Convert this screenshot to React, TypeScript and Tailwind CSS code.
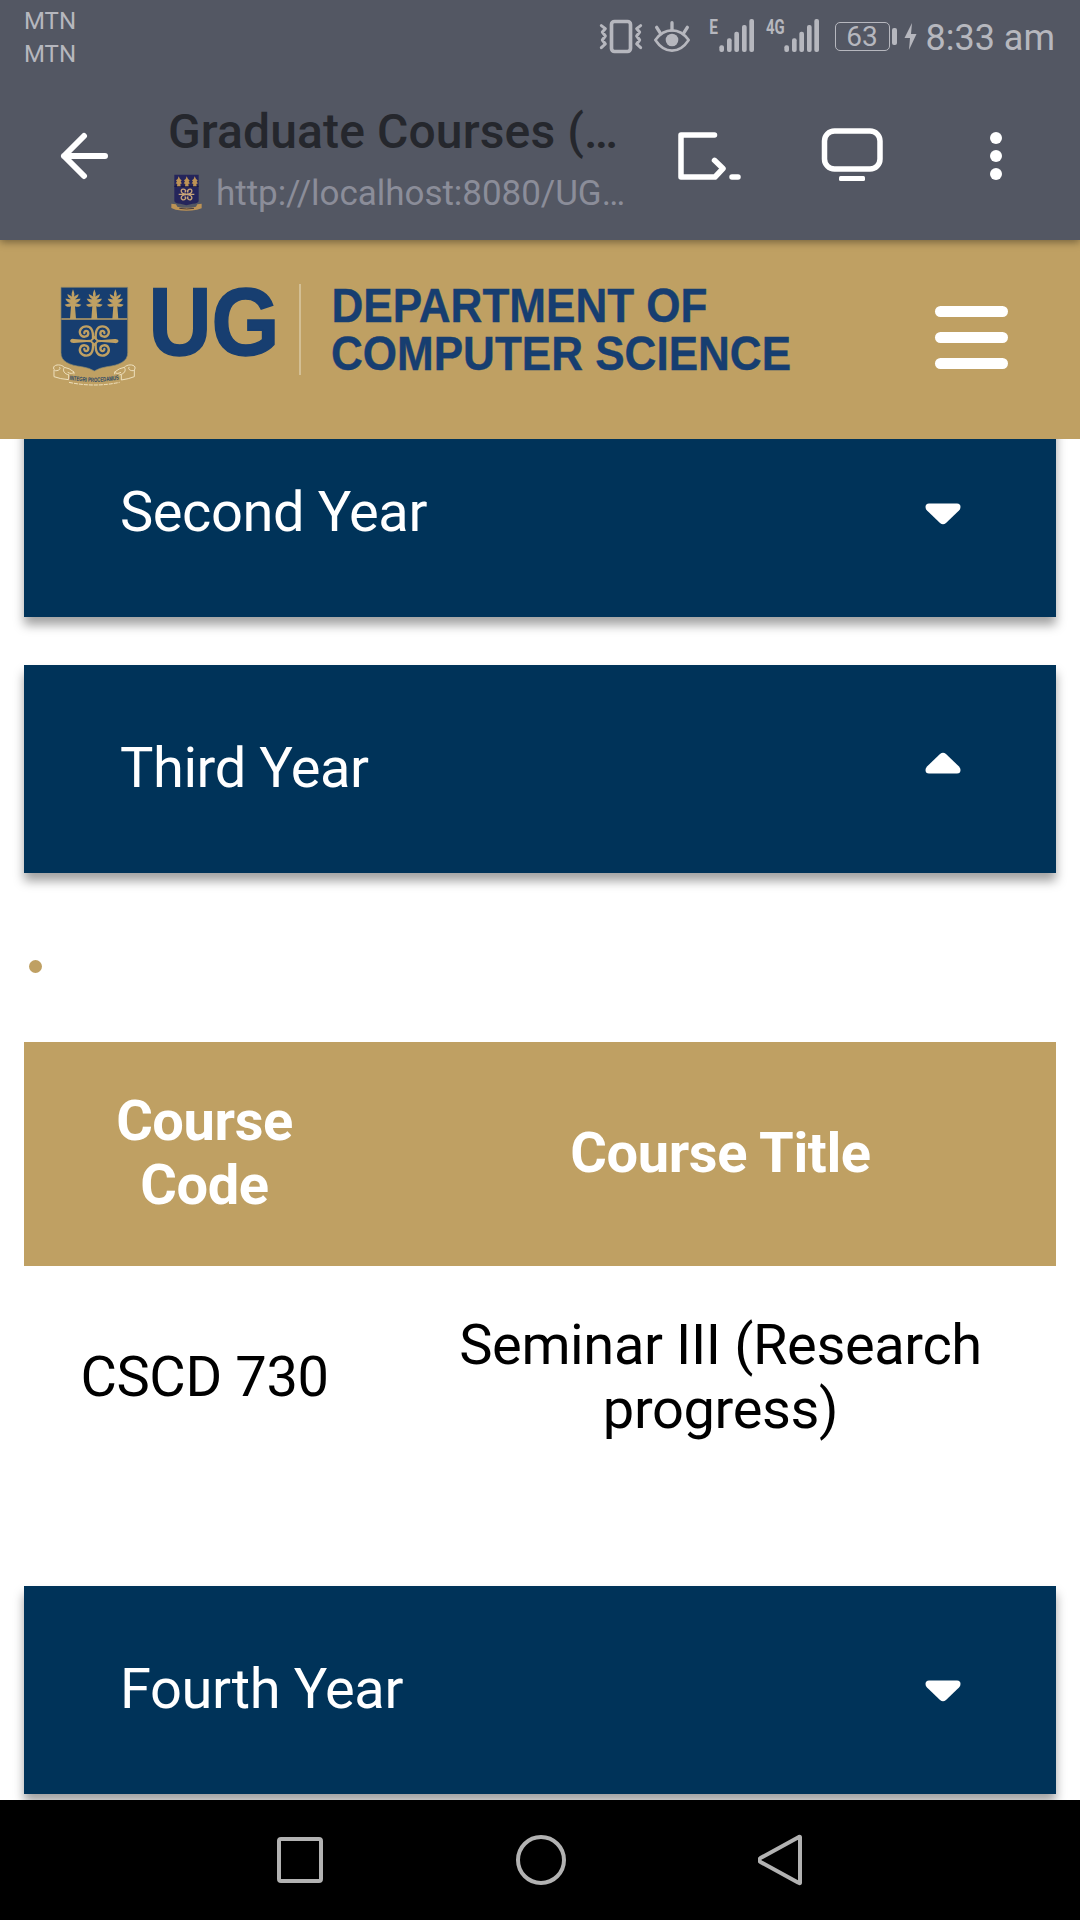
import React from "react";

const STATUS = "#b6b7be";

function Vibrate() {
  return (
    <svg className="h-[36px] w-[44px] shrink-0" viewBox="57 54 132 108" fill="none" stroke={STATUS}>
      <rect x="94.500" y="64.500" width="57" height="90" rx="9" strokeWidth="11" />
      <path d="M64 77l12 9-9 10 9 12-9 12 9 12-12 11M182 77l-12 9 9 10-9 12 9 12-9 12 12 11" strokeWidth="9" strokeLinecap="round" strokeLinejoin="round" />
    </svg>
  );
}

function Eye() {
  return (
    <svg className="ml-[9px] h-[36px] w-[40px] shrink-0" viewBox="216 54 120 108" fill="none" stroke={STATUS}>
      <path d="M226 120Q247 91 276 91T326 120Q305 152 276 152T226 120Z" strokeWidth="8" strokeLinejoin="round" />
      <circle cx="276" cy="120" r="19" fill={STATUS} stroke="none" />
      <path d="M276 68v22M230 82l10 16M322 82l-10 16" strokeWidth="10" strokeLinecap="round" />
    </svg>
  );
}

function Signal({ label }: { label: string }) {
  const wide = label.length > 1;
  return (
    <svg className={wide ? "ml-[10px] -mt-[6px] h-[42px] w-[55px] shrink-0" : "ml-[16px] -mt-[6px] h-[42px] w-[47px] shrink-0"} viewBox={wide ? "-24 36 165 126" : "0 36 141 126"} fill={STATUS}>
      <text x={wide ? -21 : 4} y="102" fontFamily="Roboto" fontWeight="700" fontSize="62" textLength={wide ? 56 : 26} lengthAdjust="spacingAndGlyphs">{label}</text>
      <rect x="34" y="136" width="14" height="20" rx="6" />
      <rect x="57" y="115" width="14" height="41" rx="6" />
      <rect x="79" y="95" width="14" height="61" rx="6" />
      <rect x="102" y="75" width="14" height="81" rx="6" />
      <rect x="124" y="57" width="14" height="99" rx="6" />
    </svg>
  );
}

function Crest() {
  const tree = "M0 88c-3 8-6 14-3 22-5-3-9-6-14-7 1 7 5 12 11 15-6 0-11-2-17-2 4 8 9 12 16 13-6 3-11 3-18 5 6 7 13 8 19 5l-3 38h18l-3-38c6 3 13 2 19-5-7-2-12-2-18-5 7-1 12-5 16-13-6 0-11 2-17 2 6-3 10-8 11-15-5 1-9 4-14 7 3-8 0-14-3-22z";
  return (
    <g transform="translate(30 260) scale(.33333)">
      <path d="M93 82H293V278C294 304 266 316 231 320Q206 324 193 333Q180 324 155 320C119 316 92 304 93 278Z" fill="#173e70" stroke="#8c8a6d" strokeWidth="2" />
      <path d="M94 177H292" stroke="#bfa063" strokeWidth="4" />
      <g fill="#bfa063">
        <path transform="translate(129 0)" d={tree} />
        <path transform="translate(193 0)" d={tree} />
        <path transform="translate(256 0)" d={tree} />
        <path d="M120 243q2-8 12-6l38 3 12-1 11-12 11 12 12 1 38-3q10-1 12 6-2 8-12 6l-38-3-12 1-11 12-11-12-12-1-38 3q-10 1-12-6z" />
      </g>
      <path d="M193 236l7 7-7 7-7-7z" fill="#173e70" />
      <g fill="none" stroke="#bfa063" strokeWidth="7" strokeLinecap="round">
        {[["1", "1"], ["-1", "1"], ["1", "-1"], ["-1", "-1"]].map(([sx, sy]) => (
          <path key={sx + sy} transform={`translate(193 243) scale(${sx} ${sy})`} d="M4-9C3-34 11-44 24-44C39-44 47-31 42-20C37-9 18-11 18-23C19-33 31-32 30-24" />
        ))}
      </g>
      <g fill="none" stroke="#eee0bd" strokeWidth="3">
        <path d="M117 345C102 341 97 332 103 322C95 313 76 312 71 321Q69 329 76 332C85 333 94 327 88 321M72 330V350Q90 357 116 359V344M103 322Q118 324 132 336Q126 344 113 337M132 336V343M268 345C284 341 289 332 283 322C291 313 310 312 315 321Q317 329 310 332C301 333 292 327 298 321M313 330V350Q296 357 274 360V344M283 322Q268 324 254 336Q260 344 273 337M254 336V343" />
        <path d="M117 367Q193 383 269 367" strokeDasharray="12 3" />
      </g>
      <path id="motto-curve" d="M118 359Q193 373 270 358" fill="none" />
      <text fill="#2b4766" fontFamily="Liberation Sans" fontWeight="700" fontSize="19">
        <textPath href="#motto-curve" textLength="150" lengthAdjust="spacingAndGlyphs">INTEGRI PROCEDAMUS</textPath>
      </text>
    </g>
  );
}

function Logo() {
  return (
    <svg className="h-[136px] w-[760px] shrink-0" viewBox="50 260 760 136">
      <Crest />
      <g fill="#173e70" fontFamily="Liberation Sans" fontWeight="700">
        <text x="148.500" y="355" fontSize="97" textLength="131" lengthAdjust="spacingAndGlyphs" stroke="#173e70" strokeWidth="1.500">UG</text>
        <text x="331.500" y="321.500" fontSize="48" textLength="376" lengthAdjust="spacingAndGlyphs" stroke="#173e70" strokeWidth=".4">DEPARTMENT OF</text>
        <text x="331" y="369.500" fontSize="48" textLength="460" lengthAdjust="spacingAndGlyphs" stroke="#173e70" strokeWidth=".4">COMPUTER SCIENCE</text>
      </g>
      <path d="M300 284V375" stroke="#dacaa5" strokeWidth="1.500" />
    </svg>
  );
}

function Caret({ up = false }: { up?: boolean }) {
  return (
    <svg className={up ? "mb-[13px] h-[22px] w-[36px] rotate-180" : "mt-[1px] h-[22px] w-[36px]"} viewBox="0 0 36 22">
      <path d="M4 .500H32Q35.500 .500 35.500 4Q35.500 6 34 7.500L21 20Q18 22.500 15 20L2 7.500Q.500 6 .500 4Q.500 .500 4 .500Z" fill="#fff" />
    </svg>
  );
}

function Year({ title, open }: { title: string; open?: boolean }) {
  return (
    <button className="flex h-[208px] w-full shrink-0 items-center justify-between bg-[#003359] pl-[96px] pr-[95px] text-left text-[56px] tracking-[-0.42px] text-white shadow-[0_8px_10px_rgba(0,0,0,0.37)]">
      <span className="pb-[2px]">{title}</span>
      <Caret up={open} />
    </button>
  );
}

export default function App() {
  return (
    <div className="flex h-[1920px] w-[1080px] flex-col overflow-hidden bg-white font-['Roboto',sans-serif]">
      <div className="z-20 h-[240px] shrink-0 bg-[#535763] shadow-[0_2px_8px_rgba(0,0,0,0.4)]">
        <div className="flex h-[72px] justify-between pl-[24px] pr-[25px] text-[#b6b7be]">
          <div className="pt-[5px] text-[24px] leading-[33px]">
            <div>MTN</div>
            <div>MTN</div>
          </div>
          <div className="flex pt-[18px]">
            <Vibrate />
            <Eye />
            <Signal label="E" />
            <Signal label="4G" />
            <div className="ml-[15px] mt-[4px] flex h-[29px] w-[55px] items-center justify-center rounded-[5px] border-[1.500px] border-[#b6b7be] text-[28px] leading-[32px]">63</div>
            <div className="ml-[2px] mt-[10px] h-[17px] w-[5px] rounded-[2px] bg-[#b6b7be]" />
            <svg className="ml-[7px] mt-[5px] h-[27px] w-[13px]" viewBox="0 0 13 27" fill={STATUS}>
              <path d="M8 0L.500 15H6L5 27L12.500 11H7Z" />
            </svg>
            <div className="ml-[9px] -mt-[1px] text-[36px] leading-[42px]">8:33 am</div>
          </div>
        </div>
        <div className="flex h-[168px] items-start">
          <svg className="ml-[60px] mt-[60px] h-[48px] w-[50px] shrink-0" viewBox="60 132 50 48" fill="none" stroke="#fff" strokeWidth="6" strokeLinecap="round" strokeLinejoin="round">
            <path d="M105 156H64M84 136L64 156L84 176" />
          </svg>
          <div className="ml-[58px] mt-[32px] w-[460px] shrink-0">
            <div className="whitespace-nowrap text-[48px] font-medium leading-[56px] tracking-[0.12px] text-[#25272d]">Graduate Courses (…</div>
            <div className="mt-[14px] flex">
              <svg className="ml-[3px] h-[38px] w-[32px] shrink-0" viewBox="0 0 96 114">
                <path d="M10 2H83V80Q83 88 65 89L46 94L28 89Q10 88 10 80Z" fill="#25255b" />
                <path d="M10 37H83" stroke="#17173e" strokeWidth="3" />
                <g fill="#bd9355">
                  <path d="M23 7l4 8 5 4-3 4 4 5-5 2 1 7h-11l1-7-5-2 4-5-3-4 5-4z" />
                  <path d="M47 7l4 8 5 4-3 4 4 5-5 2 1 7h-11l1-7-5-2 4-5-3-4 5-4z" />
                  <path d="M71 7l4 8 5 4-3 4 4 5-5 2 1 7h-11l1-7-5-2 4-5-3-4 5-4z" />
                </g>
                <path d="M23 61H70M46 60C24 58 29 42 40 46Q48 51 41 55M48 60C69 58 64 42 54 46Q46 51 52 55M46 62C24 64 29 80 40 77Q48 72 41 68M48 62C69 64 64 80 54 77Q46 72 52 68" fill="none" stroke="#c8a478" strokeWidth="4" />
                <path d="M1 89l14 2 4 7q27 7 56 0l4-7 13-2v14l-14 4q-31 6-64 0L1 102z" fill="#bd9355" />
                <path d="M25 103q22 4 44 0" stroke="#4a3c3c" strokeWidth="3" fill="none" />
              </svg>
              <span className="ml-[13px] mt-[-1px] whitespace-nowrap text-[35px] leading-[41px] tracking-[-0.04px] text-[#8b8d99]">http://localhost:8080/UG…</span>
            </div>
          </div>
          <svg className="ml-[48px] mt-[58px] h-[52px] w-[66px] shrink-0" viewBox="676 130 66 52" fill="none" stroke="#fff" strokeWidth="5.500" strokeLinecap="round" strokeLinejoin="round">
            <path d="M714.500 135H681V177H715L723 168.500L714.500 160.300M732 177H738" />
          </svg>
          <svg className="ml-[76px] mt-[54px] h-[56px] w-[68px] shrink-0" viewBox="818 126 68 56" fill="none" stroke="#fff" strokeWidth="5.500">
            <rect x="824.500" y="131" width="55.500" height="38" rx="10" />
            <rect x="839" y="176" width="26" height="5" rx="1.500" fill="#fff" stroke="none" />
          </svg>
          <div className="ml-[104px] mt-[60px] flex flex-col gap-[6px]">
            <i className="block h-3 w-3 rounded-full bg-white" />
            <i className="block h-3 w-3 rounded-full bg-white" />
            <i className="block h-3 w-3 rounded-full bg-white" />
          </div>
        </div>
      </div>
      <header className="z-10 flex h-[199px] shrink-0 items-start justify-between bg-[#bfa063] pl-[50px] pr-[72px] pt-[20px]">
        <Logo />
        <div className="mt-[46px] flex w-[73px] flex-col gap-[15px]">
          <i className="block h-[11px] rounded-full bg-white" />
          <i className="block h-[11px] rounded-full bg-white" />
          <i className="block h-[11px] rounded-full bg-white" />
        </div>
      </header>
      <main className="-mt-[30px] flex min-h-0 flex-1 flex-col overflow-hidden px-[24px]">
        <Year title="Second Year" />
        <div className="h-12 shrink-0" />
        <Year title="Third Year" open />
        <div className="h-[169px] shrink-0 pl-[5px] pt-[87px]">
          <div className="h-[13px] w-[13px] rounded-full bg-[#bfa063]" />
        </div>
        <div className="grid h-[224px] shrink-0 grid-cols-[361px_671px] items-center bg-[#bfa063] pb-[2px] text-center text-[56px] font-bold leading-[64px] tracking-[-0.4px] text-white">
          <div>Course<br />Code</div>
          <div>Course Title</div>
        </div>
        <div className="grid h-[224px] shrink-0 grid-cols-[361px_671px] items-center pb-[2px] text-center text-[56px] leading-[64px] tracking-[-0.38px] text-black">
          <div>CSCD 730</div>
          <div>Seminar III (Research<br />progress)</div>
        </div>
        <div className="h-[96px] shrink-0" />
        <Year title="Fourth Year" />
      </main>
      <nav className="z-10 flex h-[120px] shrink-0 items-center justify-between bg-black pl-[277px] pr-[276px]">
        <div className="h-[46px] w-[46px] rounded-[4px] border-4 border-[#b2b2b2]" />
        <div className="h-[50px] w-[50px] rounded-full border-4 border-[#b2b2b2]" />
        <svg className="h-[52px] w-[46px]" viewBox="0 0 46 52" fill="none" stroke="#b2b2b2" strokeWidth="4" strokeLinejoin="round">
          <path d="M42 3.500V48.500Q42 50 40 48.500L2.500 28Q0 26 2.500 24L40 3.500Q42 2 42 3.500Z" />
        </svg>
      </nav>
    </div>
  );
}
